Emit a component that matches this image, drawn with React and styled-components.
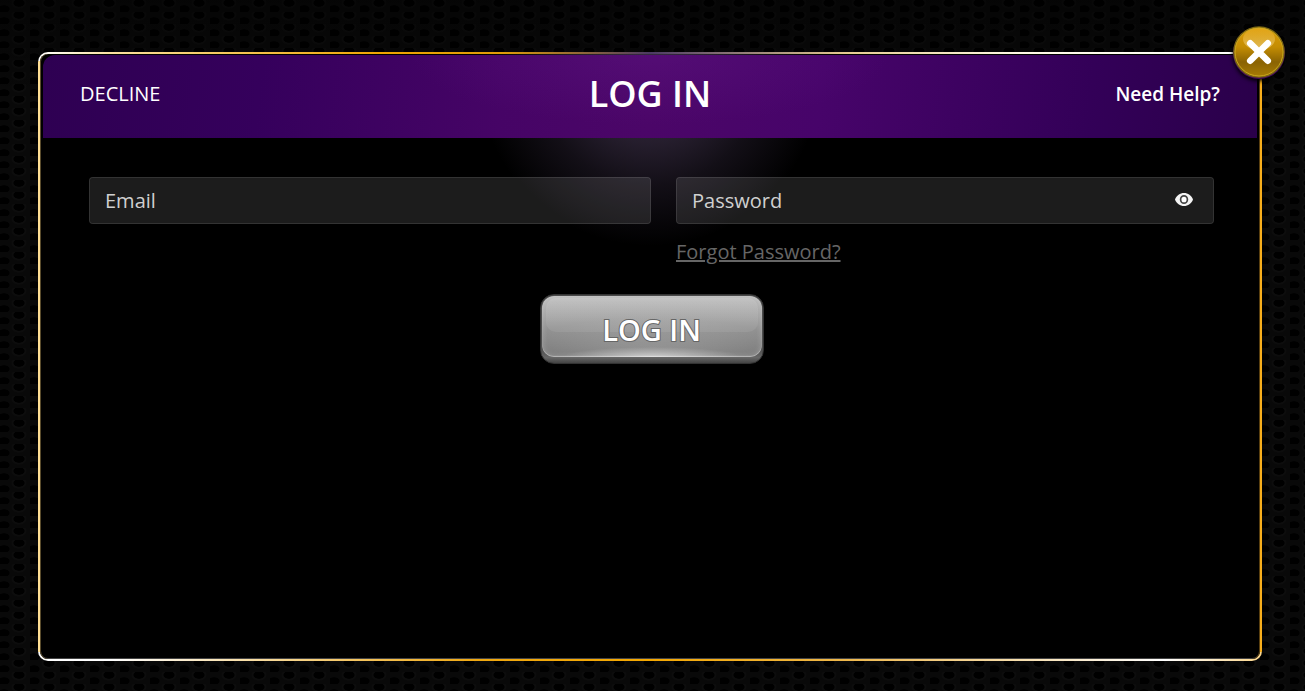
import React, { Component } from 'react'
import styled, { createGlobalStyle } from 'styled-components'

const GlobalStyle = createGlobalStyle`
    * {
        box-sizing: border-box;
    }

    body {
        margin: 0;
        background: #000;
        color: #fff;
        font-family: 'Open Sans', 'Noto Sans', sans-serif;
    }
`

const Page = styled.main`
    display: flex;
    min-height: 100vh;
    padding: 52px 43px 30px 38px;
    background:
        linear-gradient(rgba(0, 0, 0, 0.4), transparent 100px),
        radial-gradient(ellipse 6px 4px at 19px 3px, #000 85%, transparent) 0 0 / 30px 12px,
        radial-gradient(ellipse 6px 4px at 4px 9px, #000 85%, transparent) 0 0 / 30px 12px,
        radial-gradient(ellipse 8px 6px at 19px 3px, #0d0d0d 85%, transparent) 0 0 / 30px 12px,
        #090909;
`

const Panel = styled.section`
    position: relative;
    flex: 1;
    padding: 1px 3px;
    border: 2px solid transparent;
    border-radius: 10px;
    box-shadow: inset 1px 0 #5a4c2c, inset -1px 0 #5a4010, inset 0 -1px #444;
    background:
        radial-gradient(circle 172px at 50% 20px, rgba(170, 135, 205, 0.34), rgba(170, 135, 205, 0.22) 40%, rgba(170, 135, 205, 0.11) 65%, transparent) padding-box,
        linear-gradient(#000, #000) padding-box,
        linear-gradient(90deg, #fff, #fbe0a0 6%, #f0a500 28%, #e09c08 38%, #4b3a63 50%, #e6cb90 66%, #fff8e4 80%, #fff) top / 100% 9px no-repeat border-box,
        linear-gradient(90deg, #fff, #fff 6%, #f0a810 36%, #f5a800 50%, #efb84c 66%, #fff 92%, #fbd58a) bottom / 100% 9px no-repeat border-box,
        linear-gradient(90deg, #ffdf94 50%, #f7ae1c 50%) border-box;
`

const Header = styled.header`
    display: grid;
    grid-template-columns: 1fr auto 1fr;
    align-items: center;
    height: 83px;
    padding: 0 37px 6px;
    border-radius: 12px 12px 0 0;
    background:
        radial-gradient(ellipse 240px 70px at 50% 0, rgba(100, 25, 140, 0.35), transparent),
        linear-gradient(97deg, #2e0052, #35005c 18%, #460466 38%, #4b0668 50%, #47046a 64%, #330058 86%, #2a004a);
`

const Title = styled.h1`
    margin: 0;
    font-size: 36px;
    font-weight: 600;
    line-height: 48px;
`

const HeaderLink = styled.a`
    justify-self: ${props => props.$end ? 'end' : 'start'};
    color: #fff;
    font-size: ${props => props.$end ? '19px' : '20px'};
    font-weight: ${props => props.$end ? 600 : 400};
    line-height: 28px;
    text-decoration: none;
`

const CloseButton = styled.button`
    position: absolute;
    top: -28px;
    right: -26px;
    width: 54px;
    height: 54px;
    padding: 0;
    border: 0;
    border-radius: 50%;
    background: none;
    cursor: pointer;
    filter: drop-shadow(0 2px 2px #000);

    svg {
        display: block;
    }
`

const Form = styled.form`
    display: flex;
    flex-direction: column;
    align-items: center;
    gap: 28px;
    padding: 39px 43px 39px 46px;
`

const Fields = styled.div`
    display: grid;
    grid-template-columns: 562fr 538fr;
    column-gap: 25px;
    width: 100%;
`

const Field = styled.div`
    display: flex;
    flex-direction: column;
    align-items: flex-start;
    gap: 14px;
`

const InputBox = styled.div`
    display: flex;
    align-items: center;
    width: 100%;
    height: 47px;
    padding: 0 16px 0 15px;
    border: 1px solid rgba(255, 255, 255, 0.2);
    border-radius: 4px;
    background: rgba(255, 255, 255, 0.11);
    background-clip: padding-box;
`

const Input = styled.input`
    flex: 1;
    min-width: 0;
    height: 28px;
    padding: 0;
    border: 0;
    outline: 0;
    background: none;
    color: #fff;
    font: 400 20px/28px 'Open Sans', 'Noto Sans', sans-serif;

    &::placeholder {
        color: #d0d0d0;
        opacity: 1;
    }
`

const EyeButton = styled.button`
    display: flex;
    padding: 2px 3px 4px;
    border: 0;
    background: none;
    cursor: pointer;
`

const ForgotLink = styled.a`
    color: #666;
    font-size: 20px;
    line-height: 28px;
`

const LoginButton = styled.button`
    display: flex;
    width: 224px;
    height: 70px;
    padding: 1px 1px 6px;
    border: 1px solid #333;
    border-radius: 14px;
    background: linear-gradient(#4a4a4a, #505050 80%, #666 92%, #444);
    cursor: pointer;
`

const LoginFace = styled.span`
    position: relative;
    display: flex;
    flex: 1;
    align-items: center;
    justify-content: center;
    align-self: stretch;
    padding-top: 6px;
    border-radius: 12px;
    background:
        radial-gradient(ellipse 90px 10px at 50% 100%, rgba(255, 255, 255, 0.5), transparent),
        radial-gradient(ellipse 140px 40px at 50% 100%, rgba(255, 255, 255, 0.2), transparent),
        linear-gradient(#bcbcbc, #929292 55%, #747474);
    box-shadow: inset 0 0 6px rgba(255, 255, 255, 0.25), inset 0 -1px 1px rgba(255, 255, 255, 0.4);

    &::before {
        content: '';
        position: absolute;
        inset: 2px 4px 25px;
        border-radius: 10px;
        background: linear-gradient(rgba(255, 255, 255, 0.12), rgba(255, 255, 255, 0.07));
    }
`

const LoginText = styled.span`
    position: relative;
    color: #fff;
    font: 600 29px/40px 'Open Sans', 'Noto Sans', sans-serif;
    paint-order: stroke fill;
    -webkit-text-stroke: 2px #666;
`

const CloseIcon = () => (
    <svg width="54" height="54" viewBox="0 0 54 54" aria-hidden="true">
        <defs>
            <linearGradient id="coin" x1="0" y1="0" x2="0" y2="1">
                <stop offset="0" stopColor="#dc9c08" />
                <stop offset="0.4" stopColor="#c48d03" />
                <stop offset="0.7" stopColor="#8a6303" />
                <stop offset="1" stopColor="#a87c04" />
            </linearGradient>
            <linearGradient id="gloss" x1="0" y1="0" x2="0" y2="1">
                <stop offset="0" stopColor="#ffc84a" stopOpacity="0.2" />
                <stop offset="1" stopColor="#fff0c0" stopOpacity="0.5" />
            </linearGradient>
        </defs>
        <circle cx="27" cy="27" r="26" fill="#42085a" />
        <circle cx="27" cy="26" r="25" fill="url(#coin)" stroke="#7a6612" strokeWidth="1.5" />
        <circle cx="27" cy="26" r="24" fill="none" stroke="#c9a41c" strokeWidth="1" />
        <ellipse cx="27" cy="13" rx="16" ry="11" fill="url(#gloss)" />
        <path d="M18.200 17.200 35.800 34.800M35.800 17.200 18.200 34.800" stroke="#fff" strokeWidth="6.500" strokeLinecap="round" />
    </svg>
)

const EyeIcon = () => (
    <svg width="20" height="16" viewBox="0 0 20 16" aria-hidden="true">
        <path d="M1 7.500C2.500 3.500 6 1 10 1S17.500 3.500 19 7.500C17.500 11.500 14 14 10 14S2.500 11.500 1 7.500Z" fill="#f4f4f4" />
        <ellipse cx="10" cy="7.500" rx="3.400" ry="3.700" fill="#fff" stroke="#444" strokeWidth="1.700" />
    </svg>
)

class App extends Component {

    state = { showPassword: false }

    togglePassword = () => {
        this.setState(prev => ({ showPassword: !prev.showPassword }));
    };

    onSubmit = (e) => {
        e.preventDefault();
    };

    render() {
        const { showPassword } = this.state

        return (
            <React.Fragment>
                <GlobalStyle />
                <Page>
                    <Panel>
                        <Header>
                            <HeaderLink href="#decline">DECLINE</HeaderLink>
                            <Title>LOG IN</Title>
                            <HeaderLink href="#help" $end>Need Help?</HeaderLink>
                        </Header>
                        <Form onSubmit={this.onSubmit}>
                            <Fields>
                                <Field>
                                    <InputBox>
                                        <Input type="email" placeholder="Email" aria-label="Email" />
                                    </InputBox>
                                </Field>
                                <Field>
                                    <InputBox>
                                        <Input
                                            type={showPassword ? 'text' : 'password'}
                                            placeholder="Password"
                                            aria-label="Password"
                                        />
                                        <EyeButton type="button" aria-label="Show password" onClick={this.togglePassword}>
                                            <EyeIcon />
                                        </EyeButton>
                                    </InputBox>
                                    <ForgotLink href="#forgot">Forgot Password?</ForgotLink>
                                </Field>
                            </Fields>
                            <LoginButton type="submit">
                                <LoginFace>
                                    <LoginText>LOG IN</LoginText>
                                </LoginFace>
                            </LoginButton>
                        </Form>
                        <CloseButton type="button" aria-label="Close">
                            <CloseIcon />
                        </CloseButton>
                    </Panel>
                </Page>
            </React.Fragment>
        )
    }
}

export default App
